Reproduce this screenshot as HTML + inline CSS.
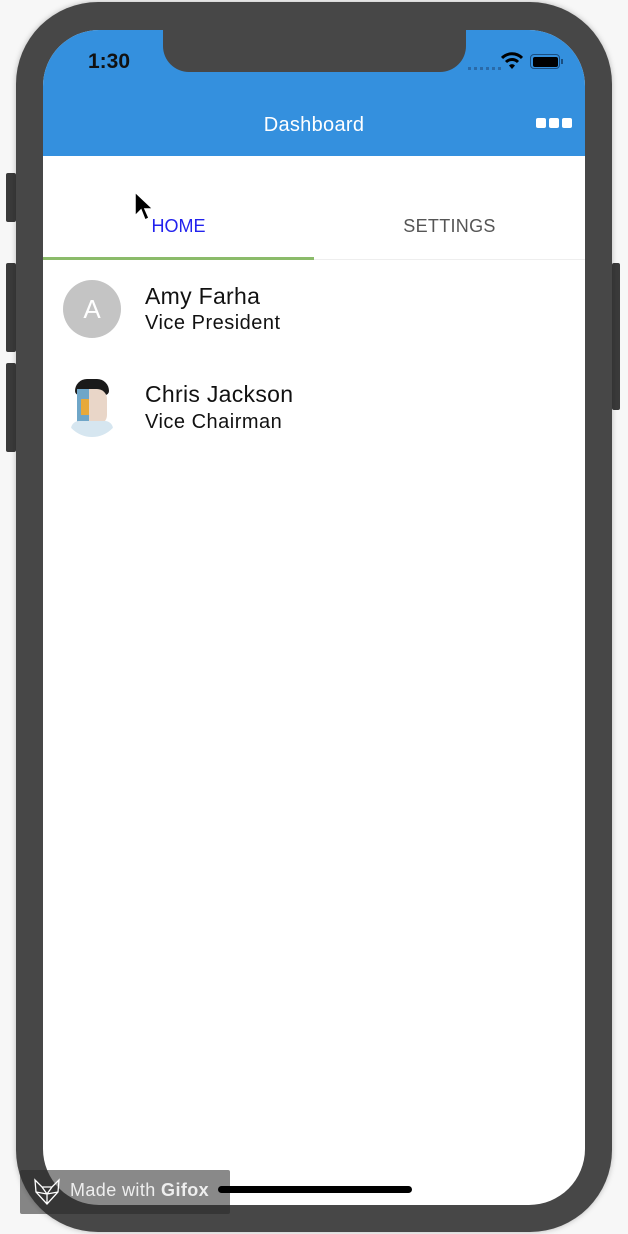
<!DOCTYPE html>
<html><head><meta charset="utf-8"><style>
*{margin:0;padding:0;box-sizing:border-box}
body{width:628px;height:1234px;background:#f7f7f7;position:relative;overflow:hidden;font-family:"Liberation Sans",sans-serif}
.abs{position:absolute}
.phone{left:16px;top:2px;width:596px;height:1230px;background:#474747;border-radius:82px;box-shadow:0 0 6px rgba(0,0,0,.25)}
.btn{background:#3a3a3a;border-radius:2px}
.screen{left:43px;top:30px;width:542px;height:1175px;background:#fff;border-radius:56px;overflow:hidden}
.hdr{left:0;top:0;width:542px;height:126px;background:#3490de}
.notch{left:120px;top:-1px;width:303px;height:43px;background:#474747;border-radius:0 0 26px 26px}
.t{position:absolute;white-space:nowrap}
</style></head><body>
<div class="abs btn" style="left:6px;top:173px;width:10px;height:49px"></div>
<div class="abs btn" style="left:6px;top:263px;width:10px;height:89px"></div>
<div class="abs btn" style="left:6px;top:363px;width:10px;height:89px"></div>
<div class="abs btn" style="left:612px;top:263px;width:8px;height:147px"></div>
<div class="abs phone"></div>
<div class="abs screen">
 <div class="abs hdr"></div>
 <div class="abs notch"></div>
 <div class="t" style="left:45px;top:20px;font-size:21px;font-weight:bold;color:#111">1:30</div>
 <div class="abs" style="left:425px;top:37px;width:33px;height:3px;border-top:3px dotted #2a6aa8"></div>
 <svg class="abs" style="left:458px;top:22px" width="22" height="18" viewBox="0 0 22 18"><path d="M1 6 A14 14 0 0 1 21 6" stroke="#000" stroke-width="3" fill="none"/><path d="M5 10 A8.5 8.5 0 0 1 17 10" stroke="#000" stroke-width="3" fill="none"/><path d="M8 13.5 L11 17 L14 13.5 A4 4 0 0 0 8 13.5Z" fill="#000"/></svg>
 <div class="abs" style="left:487px;top:24px;width:30px;height:15px;border:1.5px solid #1a4e80;border-radius:4px;padding:1.5px"><div style="width:100%;height:100%;background:#000;border-radius:2px"></div></div>
 <div class="abs" style="left:518px;top:29px;width:2px;height:5px;background:#1a4e80"></div>
 <div class="t" style="left:0;width:542px;text-align:center;top:84px;font-size:20px;color:#fff;letter-spacing:0.3px">Dashboard</div>
 <div class="abs" style="left:493px;top:88px;width:10px;height:10px;background:#fff;border-radius:2px"></div>
 <div class="abs" style="left:506px;top:88px;width:10px;height:10px;background:#fff;border-radius:2px"></div>
 <div class="abs" style="left:519px;top:88px;width:10px;height:10px;background:#fff;border-radius:2px"></div>
 <div class="t" style="left:0;width:271px;text-align:center;top:186px;font-size:18px;color:#2222ee">HOME</div>
 <div class="t" style="left:271px;width:271px;text-align:center;top:186px;font-size:18px;color:#555;letter-spacing:0.3px">SETTINGS</div>
 <div class="abs" style="left:0;top:229px;width:542px;height:1px;background:#eee"></div>
 <div class="abs" style="left:0;top:227px;width:271px;height:3px;background:#8bbb6a"></div>
 <svg class="abs" style="left:90px;top:160px" width="24" height="36" viewBox="0 0 24 36"><path d="M2 2 L2 26 L8 20 L12 30 L16 28 L12 19 L20 19 Z" fill="#000" stroke="#fff" stroke-width="1.5"/></svg>
 <div class="abs" style="left:20px;top:250px;width:58px;height:58px;border-radius:50%;background:#c4c4c4;color:#fff;font-size:26px;text-align:center;line-height:58px">A</div>
 <div class="t" style="left:102px;top:253px;font-size:23px;color:#111;letter-spacing:0.3px">Amy Farha</div>
 <div class="t" style="left:102px;top:282px;font-size:20px;color:#111;letter-spacing:0.5px">Vice President</div>
 <div class="abs" style="left:20px;top:347px;width:58px;height:60px;border-radius:50%;overflow:hidden">
  <div class="abs" style="left:12px;top:2px;width:34px;height:16px;background:#1a1a1a;border-radius:12px 12px 4px 4px"></div>
  <div class="abs" style="left:14px;top:12px;width:30px;height:36px;background:#e9d6c8;border-radius:10px"></div>
  <div class="abs" style="left:14px;top:12px;width:12px;height:36px;background:#6fa6c8"></div>
  <div class="abs" style="left:18px;top:22px;width:8px;height:16px;background:#e8a93a"></div>
  <div class="abs" style="left:8px;top:44px;width:42px;height:16px;background:#d6e6f0;border-radius:10px"></div>
 </div>
 <div class="t" style="left:102px;top:351px;font-size:23px;color:#111;letter-spacing:0.3px">Chris Jackson</div>
 <div class="t" style="left:102px;top:381px;font-size:20px;color:#111;letter-spacing:0.5px">Vice Chairman</div>
</div>
<div class="abs" style="left:20px;top:1170px;width:210px;height:44px;background:rgba(40,40,40,.55);border-radius:2px"></div>
<svg class="abs" style="left:32px;top:1178px" width="30" height="28" viewBox="0 0 30 28"><path d="M3 2 L10 9 L20 9 L27 2 L26 14 L15 26 L4 14 Z M10 9 L15 16 L20 9 M4 14 L15 16 L26 14 M15 16 L15 26" stroke="#fff" stroke-width="1.3" fill="none"/></svg>
<div class="t" style="left:70px;top:1180px;font-size:18px;color:#eee;letter-spacing:0.4px">Made with <b>Gifox</b></div>
<div class="abs" style="left:218px;top:1186px;width:194px;height:7px;background:#000;border-radius:4px"></div>
</body></html>
